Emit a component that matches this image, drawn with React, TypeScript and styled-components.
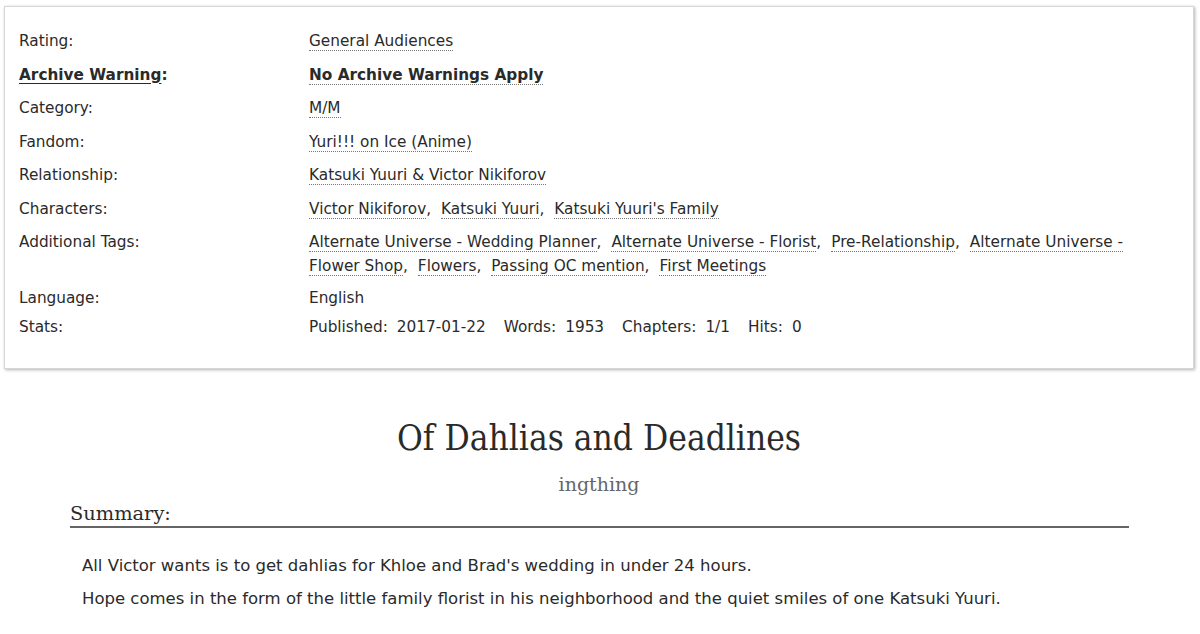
import styled, { createGlobalStyle } from 'styled-components';

const GlobalStyle = createGlobalStyle`
  body {
    margin: 0;
    background: #fff;
    color: #2a2a2a;
    font-family: 'DejaVu Sans', 'Liberation Sans', sans-serif;
  }
`;

type Tag = { label: string; bold?: boolean };

const meta: { term: string; strong?: boolean; compact?: boolean; tags?: Tag[]; text?: string }[] = [
  { term: 'Rating:', tags: [{ label: 'General Audiences' }] },
  { term: 'Archive Warning:', strong: true, tags: [{ label: 'No Archive Warnings Apply', bold: true }] },
  { term: 'Category:', tags: [{ label: 'M/M' }] },
  { term: 'Fandom:', tags: [{ label: 'Yuri!!! on Ice (Anime)' }] },
  { term: 'Relationship:', tags: [{ label: 'Katsuki Yuuri & Victor Nikiforov' }] },
  {
    term: 'Characters:',
    tags: [{ label: 'Victor Nikiforov' }, { label: 'Katsuki Yuuri' }, { label: "Katsuki Yuuri's Family" }],
  },
  {
    term: 'Additional Tags:',
    tags: [
      { label: 'Alternate Universe - Wedding Planner' },
      { label: 'Alternate Universe - Florist' },
      { label: 'Pre-Relationship' },
      { label: 'Alternate Universe - Flower Shop' },
      { label: 'Flowers' },
      { label: 'Passing OC mention' },
      { label: 'First Meetings' },
    ],
  },
  { term: 'Language:', compact: true, text: 'English' },
];

const stats = [
  ['Published:', '2017-01-22'],
  ['Words:', '1953'],
  ['Chapters:', '1/1'],
  ['Hits:', '0'],
];

const App = () => {
  return (
    <>
      <GlobalStyle />
      <Page>
        <MetaBox>
          {meta.map((row) => (
            <Row key={row.term} $compact={row.compact}>
              <Term $strong={row.strong}>
                {row.strong ? <TermLink>{row.term.replace(':', '')}</TermLink> : row.term.replace(':', '')}:
              </Term>
              <Value>
                {row.text}
                {row.tags?.map((tag, i) => (
                  <TagItem key={tag.label}>
                    <TagLink $bold={tag.bold}>{tag.label}</TagLink>
                    {i < row.tags!.length - 1 && ','}
                  </TagItem>
                ))}
              </Value>
            </Row>
          ))}
          <Row $compact>
            <Term>Stats:</Term>
            <Value>
              {stats.map(([k, v]) => (
                <Stat key={k}>
                  {k}
                  <StatNum>{v}</StatNum>
                </Stat>
              ))}
            </Value>
          </Row>
        </MetaBox>

        <Preface>
          <Title>Of Dahlias and Deadlines</Title>
          <Byline>ingthing</Byline>
          <Summary>
            <SummaryHeading>Summary:</SummaryHeading>
            <SummaryText>
              <p>All Victor wants is to get dahlias for Khloe and Brad's wedding in under 24 hours.</p>
              <p>Hope comes in the form of the little family florist in his neighborhood and the quiet smiles of one Katsuki Yuuri.</p>
            </SummaryText>
          </Summary>
        </Preface>
      </Page>
    </>
  );
};

const Page = styled.main`
  padding: 6px 6px 0 4px;
`;

const MetaBox = styled.dl`
  display: flex;
  flex-direction: column;
  gap: 9.5px;

  margin: 0;
  padding: 22px 14px 31px;

  border: 1px solid #d6d6d6;
  background: #fff;
  box-shadow: 1px 1px 3px rgba(0, 0, 0, 0.3);
  font-size: 15.3px;
`;

const Row = styled.div<{ $compact?: boolean }>`
  display: grid;
  grid-template-columns: 290px 840px;

  line-height: ${({ $compact }) => ($compact ? '20px' : '24px')};
`;

const Term = styled.dt<{ $strong?: boolean }>`
  font-weight: ${({ $strong }) => ($strong ? 700 : 400)};
`;

const TermLink = styled.span`
  text-decoration: underline;
  text-underline-offset: 3px;
`;

const Value = styled.dd`
  margin: 0;
`;

const TagItem = styled.span`
  margin-right: 10px;
`;

const TagLink = styled.a<{ $bold?: boolean }>`
  color: #2a2a2a;
  font-weight: ${({ $bold }) => ($bold ? 700 : 400)};
  border-bottom: 1px dotted #777;
  cursor: pointer;
`;

const Stat = styled.span`
  margin-right: 18px;
`;

const StatNum = styled.span`
  margin-left: 9px;
`;

const Preface = styled.section`
  padding: 47px 66px 0;
`;

const Title = styled.h2`
  margin: 0;

  color: #2a2a2a;
  font-family: 'DejaVu Serif', Georgia, serif;
  font-size: 35px;
  font-stretch: condensed;
  font-weight: 400;
  line-height: 44px;
  text-align: center;
`;

const Byline = styled.h3`
  margin: 11px 0 0;

  color: #666;
  font-family: 'DejaVu Serif', Georgia, serif;
  font-size: 19px;
  font-weight: 400;
  line-height: 26px;
  text-align: center;
`;

const Summary = styled.div`
  margin-top: 5px;
  width: 1059px;
`;

const SummaryHeading = styled.h3`
  margin: 0;

  border-bottom: 2px solid #666;
  color: #2a2a2a;
  font-family: 'DejaVu Serif', Georgia, serif;
  font-size: 19.4px;
  font-weight: 400;
  line-height: 24px;
`;

const SummaryText = styled.blockquote`
  margin: 27px 0 0 12px;

  font-size: 16.5px;
  line-height: 21px;

  p {
    margin: 0 0 12px;
  }
`;

export default App;
